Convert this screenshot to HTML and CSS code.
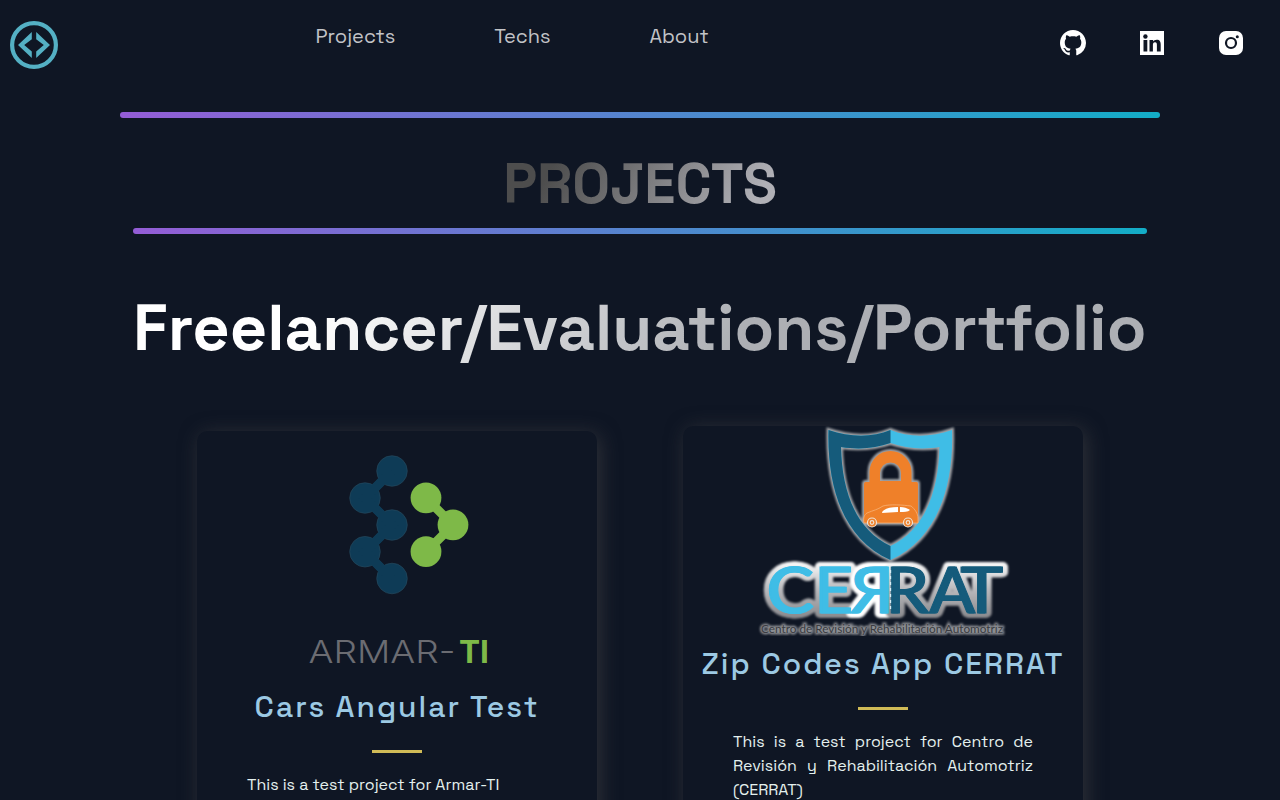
FILE: index.html
```html
<!DOCTYPE html>
<html lang="en">
<head>
<meta charset="utf-8">
<title>Portfolio</title>
<link rel="stylesheet" href="styles.css">
</head>
<body>
<header class="nav">
  <a class="brand" aria-label="Home">
    <svg width="48" height="48" viewBox="0 0 48 48" fill="#54b0c4">
      <circle cx="24" cy="24" r="21.9" fill="none" stroke="#54b0c4" stroke-width="4.2"/>
      <path d="M21.800 11v7.200L14.200 24l7.600 6.500V37L8 24zM26.200 11v7.200l7.600 5.800-7.600 6.500V37L40 24z"/>
    </svg>
  </a>
  <nav class="links">
    <a class="link link-projects">Projects</a>
    <a class="link link-techs">Techs</a>
    <a class="link link-about">About</a>
  </nav>
  <div class="social">
    <svg width="26" height="26" viewBox="0 0 16 16" fill="#fff"><path d="M8 0C3.58 0 0 3.58 0 8c0 3.54 2.29 6.53 5.47 7.59.4.07.55-.17.55-.38 0-.19-.01-.82-.01-1.49-2.01.37-2.53-.49-2.69-.94-.09-.23-.48-.94-.82-1.13-.28-.15-.68-.52-.01-.53.63-.01 1.08.58 1.23.82.72 1.21 1.87.87 2.33.66.07-.52.28-.87.51-1.07-1.78-.2-3.64-.89-3.64-3.95 0-.87.31-1.59.82-2.15-.08-.2-.36-1.02.08-2.12 0 0 .67-.21 2.2.82.64-.18 1.32-.27 2-.27s1.36.09 2 .27c1.53-1.04 2.2-.82 2.2-.82.44 1.1.16 1.92.08 2.12.51.56.82 1.27.82 2.15 0 3.07-1.87 3.75-3.65 3.95.29.25.54.73.54 1.48 0 1.07-.01 1.93-.01 2.2 0 .21.15.46.55.38A8.01 8.01 0 0 0 16 8c0-4.42-3.58-8-8-8z"/></svg>
    <svg width="24" height="24" viewBox="0 0 24 24"><path fill="#fff" d="M0 0h24v24H0z"/><g fill="#0f1624"><circle cx="5.4" cy="5.5" r="2.2"/><path d="M3.500 9h3.800v11.500H3.500zM9.500 9h3.600v1.600c.7-1.200 2-1.900 3.600-1.900 3.300 0 4 2.100 4 5v6.800h-3.800v-6c0-1.500 0-3.200-1.900-3.200s-2.100 1.500-2.100 3.100v6.100H9.500z"/></g></svg>
    <svg width="24" height="24" viewBox="0 0 24 24"><rect width="24" height="24" rx="7" fill="#fff"/><circle cx="12" cy="12" r="5" fill="none" stroke="#0f1624" stroke-width="2.2"/><circle cx="18.300" cy="5.700" r="1.500" fill="#0f1624"/></svg>
  </div>
</header>
<main class="section">
  <div class="divider divider-wide"></div>
  <h2 class="heading"><span class="heading-text">PROJECTS</span></h2>
  <div class="divider divider-narrow"></div>
  <h1 class="title"><span class="title-text">Freelancer/Evaluations/Portfolio</span></h1>
  <div class="cards">
    <article class="card card-armar">
      <svg class="logo" width="400" height="248" viewBox="197 431 400 248">
        <path fill="none" stroke="#0e3b56" stroke-width="9" d="M392 471l-27 27 27 27-27 27 27 27"/>
        <g fill="#0e3b56" stroke="#294b60" stroke-width=".6"><circle cx="392" cy="471" r="15.300"/><circle cx="365" cy="498" r="15.300"/><circle cx="392" cy="525" r="15.300"/><circle cx="365" cy="551.700" r="15.300"/><circle cx="392" cy="578.500" r="15.300"/></g>
        <path fill="none" stroke="#0e3b56" stroke-width="9" d="M392 471l-27 27 27 27-27 27 27 27"/>
        <g fill="#7eb948"><path fill="none" stroke="#7eb948" stroke-width="9" d="M426 498l27 27-27 27"/><circle cx="426" cy="497.800" r="15.400"/><circle cx="453" cy="524.800" r="15.400"/><circle cx="426" cy="551.700" r="15.400"/></g>
        <text class="armar" x="308.500" y="663" textLength="147" lengthAdjust="spacingAndGlyphs">ARMAR-</text>
        <text class="armar-ti" x="459" y="663" textLength="30" lengthAdjust="spacingAndGlyphs">TI</text>
      </svg>
      <h3 class="card-title">Cars Angular Test</h3>
      <hr class="rule">
      <p class="text">This is a test project for Armar-TI</p>
    </article>
    <article class="card card-cerrat">
      <svg class="logo" width="400" height="210" viewBox="683 426 400 210">
        <defs>
          <linearGradient id="silver" x1="0" y1="560" x2="0" y2="620" gradientUnits="userSpaceOnUse"><stop offset="0" stop-color="#fff"/><stop offset=".5" stop-color="#b8b8bb"/><stop offset="1" stop-color="#858589"/></linearGradient>
          <filter id="soft" x="-5%" y="-20%" width="110%" height="140%"><feGaussianBlur stdDeviation=".8"/></filter>
          <path id="shield" fill-rule="evenodd" d="M828.500 430c22 7.500 44 7.500 62 0 18 7.500 40 7.500 61.500 0 2 57-15 109-61.500 130C843 539 827 487 828.500 430zM841 447c1 45 15 83 49.500 99 34-16 48-54 49-99-19 3-34 1-49-4-15 5-30 7-49.500 4z"/>
          <path id="lock" fill-rule="evenodd" d="M869.500 482v-10a21 21 0 0 1 42 0v10h5q1.500 0 1.500 2v39H864v-39q0-2 1.500-2zM880 481h21v-8a10.500 10.500 0 0 0-21 0z"/>
          <g id="light-run">
            <text x="766" y="612.500" textLength="47" lengthAdjust="spacingAndGlyphs">C</text>
            <text x="814" y="612.500" textLength="38" lengthAdjust="spacingAndGlyphs">E</text>
            <text transform="translate(893 612.5) scale(-1 1)" textLength="43" lengthAdjust="spacingAndGlyphs">R</text>
          </g>
          <g id="dark-run">
            <text x="885" y="612.500" textLength="43" lengthAdjust="spacingAndGlyphs">R</text>
            <text x="929" y="612.500" textLength="45" lengthAdjust="spacingAndGlyphs">A</text>
            <text x="960" y="612.500" textLength="42" lengthAdjust="spacingAndGlyphs">T</text>
          </g>
          <g id="letters"><use href="#light-run"/><use href="#light-run" x="1.500"/></g>
          <g id="letters-dark"><use href="#dark-run"/><use href="#dark-run" x="1.500"/></g>
        </defs>
        <g fill="none" stroke="#a2a4a8" stroke-width="4" filter="url(#soft)"><use href="#shield"/><use href="#lock"/></g>
        <use href="#shield" fill="#3fbde6"/>
        <path fill="#155b7b" d="M828.500 430c22 7.500 44 7.500 62 0v13c-15 5-30 7-49.500 4 1 45 15 83 49.500 99v14C843 539 827 487 828.500 430z"/>
        <use href="#lock" fill="#ef8029"/>
        <path d="M864 523c-1-5 0-8 3-10 7-3 10-3 16-7 7-2 20-1 28 0 4 3 7 8 7 12v5z" fill="#ef8029" stroke="#f8b176" stroke-width=".8"/>
        <path d="M882 513c0-3 6-6 16-6v5zM900 507c4 0 7 1 10 3-2 2-6 2-10 2z" fill="#fff"/>
        <g fill="#ef8029" stroke="#eee2d6" stroke-width="1.200"><circle cx="872" cy="522.500" r="4.500"/><circle cx="908" cy="522.500" r="4.500"/><circle cx="872" cy="522.500" r="1.800"/><circle cx="908" cy="522.500" r="1.800"/></g>
        <g class="cerrat cerrat-edge" filter="url(#soft)"><use href="#letters"/><use href="#letters-dark"/></g>
        <g class="cerrat cerrat-light"><use href="#letters"/></g>
        <g class="cerrat cerrat-dark"><use href="#letters-dark"/></g>
        <path d="M890.500 570v40" stroke="#d6edf5" stroke-width="1.300" stroke-dasharray="3 3"/>
        <g class="tagline"><text class="tag-edge" filter="url(#soft)" x="761" y="633" textLength="242" lengthAdjust="spacingAndGlyphs">Centro de Revisión y Rehabilitación Automotriz</text><text x="761" y="633" textLength="242" lengthAdjust="spacingAndGlyphs">Centro de Revisión y Rehabilitación Automotriz</text></g>
      </svg>
      <h3 class="card-title">Zip Codes App CERRAT</h3>
      <hr class="rule">
      <p class="text">This is a test project for Centro de Revisión y Rehabilitación Automotriz (CERRAT)</p>
    </article>
  </div>
</main>
</body>
</html>
```
FILE: styles.css
```css
* { box-sizing: border-box; }
body { margin: 0; height: 800px; overflow: hidden; background: #0f1624; color: #fff; font-family: "Space Grotesk", Inter, sans-serif; }
.nav { display: flex; height: 112px; padding: 21px 37px 0 10px; }
.brand { width: 48px; height: 48px; }
.links { display: flex; margin-left: 257.600px; }
.link { font-size: 20px; line-height: 30px; color: rgba(255,255,255,.75); white-space: nowrap; }
.link-projects { width: 178.600px; }
.link-techs { width: 155.200px; }
.social { display: flex; margin-left: auto; gap: 54px; padding-top: 9px; height: 35px; align-items: center; }
.social svg:last-child { margin-left: 1px; }
.divider { height: 6px; margin: 0 auto; border-radius: 10px; background: linear-gradient(270deg, #13adc7 0%, #945dd6 100%); }
.divider-wide { width: 1040px; }
.divider-narrow { width: 1014px; }
.heading { display: flex; justify-content: center; margin: 0; height: 110px; padding-top: 30px; font-size: 56px; line-height: 72px; font-weight: 600; white-space: nowrap; }
.heading-text { color: transparent; background: linear-gradient(121.57deg, #4d4d4d 18.77%, #b0b0b6 88%); -webkit-background-clip: text; background-clip: text; }
.title { margin: 0 133px; height: 192px; padding-top: 56px; font-size: 65px; line-height: 76px; font-weight: 700; white-space: nowrap; }
.title-text { display: block; width: 1014px; color: transparent; background: linear-gradient(121.57deg, #fff 18.77%, rgba(255,255,255,.66) 60.15%); -webkit-background-clip: text; background-clip: text; }
.cards { display: flex; gap: 86px; padding-left: 197px; align-items: flex-start; }
.card { width: 400px; height: 600px; border-radius: 10px; box-shadow: 3px 3px 20px rgba(80,78,78,.5); }
.card-armar { margin-top: 5px; }
.logo { display: block; }
.card-title { margin: 0; text-align: center; font-size: 30px; line-height: 56px; font-weight: 500; color: #9cc9e3; letter-spacing: 2px; white-space: nowrap; }
.rule { width: 50px; height: 3px; margin: 15px auto 20px; border: 0; background: #d0bb57; }
.text { margin: 0; padding: 0 50px; font-size: 16px; line-height: 24px; color: #e4f0ee; text-align: justify; }
.armar { font: 300 31px Inter, sans-serif; fill: #6b6c72; }
.armar-ti { font: 700 31px Inter, sans-serif; fill: #7eb948; }
.cerrat { font: 400 63px Lato, sans-serif; }
.cerrat-edge { fill: none; stroke: url(#silver); stroke-width: 10px; stroke-linejoin: round; }
.cerrat-light { fill: #3fbde6; stroke: #3fbde6; stroke-width: 1px; }
.cerrat-dark { fill: #155b7b; stroke: #155b7b; stroke-width: 1px; }
.tagline { font: 400 11px Lato, sans-serif; fill: #3a3c42; }
.tag-edge { fill: #8c8e93; stroke: #8c8e93; stroke-width: 3px; }
```
